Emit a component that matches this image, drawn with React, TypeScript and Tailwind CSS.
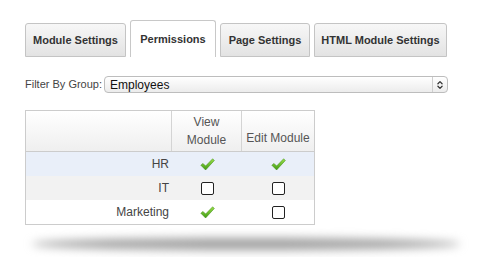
import { ChevronsUpDown } from 'lucide-react'

const tabs = [
  { label: 'Module Settings', w: 'w-[101px]' },
  { label: 'Permissions', w: 'w-[86px]', active: true },
  { label: 'Page Settings', w: 'w-[90px]' },
  { label: 'HTML Module Settings', w: 'w-[133px]' },
]

const rows = [
  { name: 'HR', view: true, edit: true, bg: 'bg-[#e9eff9]' },
  { name: 'IT', view: false, edit: false, bg: 'bg-[#f2f2f2]' },
  { name: 'Marketing', view: true, edit: false, bg: 'bg-white' },
]

function Check() {
  return (
    <svg width="15" height="13" viewBox="0 0 15 13">
      <defs>
        <linearGradient id="chk" x1="0" y1="0" x2="0" y2="1">
          <stop offset="0" stopColor="#9be04a" />
          <stop offset="1" stopColor="#3f9a12" />
        </linearGradient>
      </defs>
      <path d="M0.8 7.2 L3 5.4 L5.6 8 L12.6 0.8 L14.4 2.4 L5.6 12 Z" fill="url(#chk)" stroke="#3d8a14" strokeWidth="0.5" strokeLinejoin="round" />
    </svg>
  )
}

function Box() {
  return <div className="w-[13px] h-[13px] rounded-[2px] border-[1.5px] border-[#222] bg-white" />
}

export default function App() {
  return (
    <div className="w-[489px] h-[257px] bg-white pl-[25px] pt-[20px] font-['Liberation_Sans',Arial,sans-serif] text-[11px] text-[#333]">
      <div className="w-[423px]">
        {/* tabs */}
        <div className="flex items-end gap-[4px] h-[37px]">
          {tabs.map(t =>
            t.active ? (
              <div key={t.label} className={`${t.w} h-[37px] flex items-center justify-center rounded-t-[3px] border border-b-0 border-[#c8c8c8] bg-white font-bold text-[#333]`}>
                {t.label}
              </div>
            ) : (
              <div key={t.label} className={`${t.w} h-[34px] flex items-center justify-center rounded-t-[3px] border border-[#c4c4c4] bg-gradient-to-b from-[#f7f7f7] to-[#e3e3e3] font-bold text-[#333]`}>
                {t.label}
              </div>
            ),
          )}
        </div>

        {/* filter */}
        <div className="flex items-center mt-[19px] h-[17px]">
          <span className="text-[#444]">Filter By Group:</span>
          <div className="ml-[2px] flex-1 h-[17px] flex items-center rounded-[4px] border border-[#bdbdbd] bg-gradient-to-b from-white to-[#ececec] shadow-[inset_0_1px_0_#fff]">
            <span className="pl-[5px] flex-1 text-[#111] text-[12px] leading-none">Employees</span>
            <div className="w-[15px] h-full border-l border-[#cfcfcf] flex items-center justify-center text-[#333]">
              <ChevronsUpDown size={10} strokeWidth={3} />
            </div>
          </div>
        </div>

        {/* permissions grid */}
        <div className="mt-[17px] w-[290px] border border-[#cccccc] text-[12px]">
          <div className="flex h-[41px] bg-gradient-to-b from-white to-[#efefef] border-b border-[#cccccc] text-[#555]">
            <div className="w-[146px] border-r border-[#d4d4d4]" />
            <div className="w-[70px] border-r border-[#d4d4d4] flex items-center justify-center text-center leading-[18px]">
              View<br />Module
            </div>
            <div className="flex-1 flex items-end justify-center pb-[4px]">Edit Module</div>
          </div>
          {rows.map(r => (
            <div key={r.name} className={`flex h-[24px] items-center ${r.bg} text-[#444]`}>
              <div className="w-[146px] text-right pr-[3px]">{r.name}</div>
              <div className="w-[70px] flex justify-center">{r.view ? <Check /> : <Box />}</div>
              <div className="flex-1 flex justify-center">{r.edit ? <Check /> : <Box />}</div>
            </div>
          ))}
        </div>
      </div>

      {/* shadow */}
      <div className="mt-[13px] ml-[7px] w-[428px] h-[12px] rounded-[50%] bg-[#a0a0a0] blur-[5px]" />
    </div>
  )
}
